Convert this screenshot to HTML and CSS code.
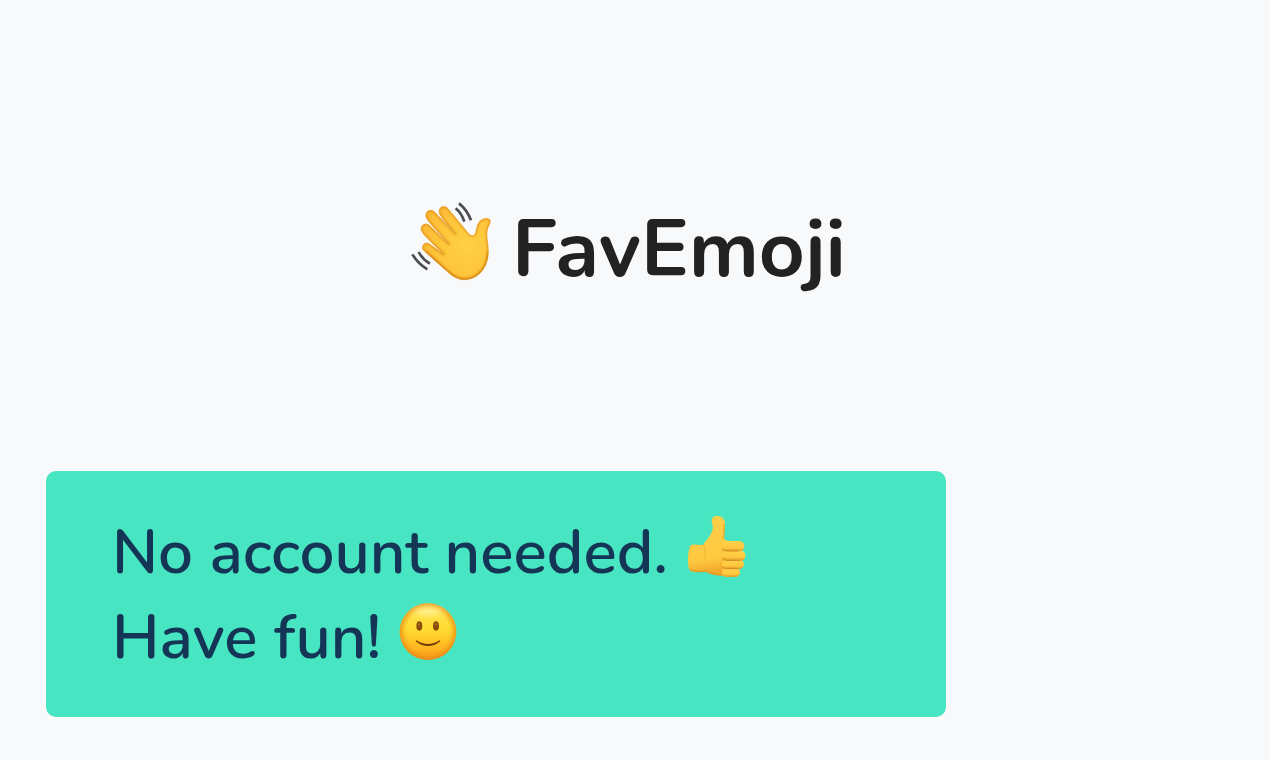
FILE: index.html
```html
<!DOCTYPE html>
<html lang="en">
    <head>
        <meta charset="UTF-8">
        <meta name="viewport" content="width=device-width, initial-scale=1.0">
        <title>FavEmoji</title>
        <link rel="stylesheet" href="styles.css">
    </head>
    <body>
        <header class="header">
            <h1 class="title">
                <svg class="emoji-wave" viewBox="30 30 246 246" aria-hidden="true">
                    <defs>
                        <radialGradient id="hand-fill" gradientUnits="userSpaceOnUse" cx="200" cy="165" r="140">
                            <stop offset="0" stop-color="#ffd045"/>
                            <stop offset="0.6" stop-color="#fec63b"/>
                            <stop offset="1" stop-color="#fbba35"/>
                        </radialGradient>
                        <clipPath id="hand-clip">
                            <path id="hand" d="M70 164C64 172 68 180 76 186L140 243C160 262 178 270 195 269C235 268 265 232 265 185C265 160 259 145 261 125C262 112 270 104 271 95C272 84 256 82 244 90C232 98 231 112 227 127C224 137 216 141 207 132L145 57C134 43 113 50 118 69C121 82 160 122 168 134L104 66C92 54 74 64 78 81C82 95 127 138 148 164L88 106C76 96 59 106 64 122C68 134 111 171 133 195L90 163C82 157 75 158 70 164Z"/>
                        </clipPath>
                        <filter id="soft" x="-20%" y="-20%" width="140%" height="140%">
                            <feGaussianBlur stdDeviation="3"/>
                        </filter>
                    </defs>
                    <use href="#hand" fill="url(#hand-fill)" stroke="#eba72f" stroke-width="2"/>
                    <g clip-path="url(#hand-clip)">
                        <use href="#hand" fill="none" stroke="#d98212" stroke-width="5" opacity="0.8" filter="url(#soft)"/>
                        <path d="M76 186L140 243C160 262 178 270 195 269C235 268 265 232 265 185" fill="none" stroke="#c9760f" stroke-width="8" opacity="0.7" filter="url(#soft)"/>
                    </g>
                    <path class="motion" d="M177 40Q201 59 213 91M167 55Q185 70 193 95M37 193Q55 222 82 238M56 186Q68 209 90 221"/>
                </svg>
                <span>FavEmoji</span>
            </h1>
        </header>
        <main class="content">
            <div class="card">
                <p class="card-line">
                    <span>No account needed.</span>
                    <svg class="emoji-thumb" viewBox="30 30 183 189" aria-hidden="true">
                        <defs>
                            <linearGradient id="thumb-fill" x1="0" y1="0" x2="0.1" y2="1">
                                <stop offset="0" stop-color="#ffcf49"/>
                                <stop offset="0.75" stop-color="#ffc940"/>
                                <stop offset="1" stop-color="#f0a52a"/>
                            </linearGradient>
                            <linearGradient id="finger-fill" x1="0" y1="0" x2="0" y2="1">
                                <stop offset="0" stop-color="#ffd34b"/>
                                <stop offset="0.65" stop-color="#ffc83f"/>
                                <stop offset="1" stop-color="#e29a27"/>
                            </linearGradient>
                        </defs>
                        <path d="M46 120C35 127 33 181 41 195C51 207 76 198 92 201C105 209 125 212 148 213L166 203L165 112L146 104C142 91 148 75 147 57C147 42 138 32 122 33C106 34 105 47 110 61C114 78 99 99 81 119C70 123 57 115 46 120Z" fill="url(#thumb-fill)"/>
                        <path d="M82 119C91 133 85 152 88 165M141 116C133 137 146 160 140 205" fill="none" stroke="#e69d25" stroke-width="3" opacity="0.5"/>
                        <path d="M145 57Q144 82 143 101M44 195Q65 201 90 199Q110 209 138 210" fill="none" stroke="#dc9423" stroke-width="4" opacity="0.6"/>
                        <g fill="url(#finger-fill)">
                            <rect x="138" y="188" width="54" height="28" rx="14"/>
                            <rect x="138" y="163" width="66" height="29" rx="14"/>
                            <rect x="137" y="136" width="71" height="31" rx="15"/>
                            <rect x="136" y="108" width="69" height="31" rx="15"/>
                        </g>
                        <path d="M140 129Q139 137 150 138H188M139 158Q141 165 150 166H191M139 184Q141 190 149 191H187" fill="none" stroke="#a6690c" stroke-width="2" opacity="0.6"/>
                    </svg>
                </p>
                <p class="card-line">
                    <span>Have fun!</span>
                    <svg class="emoji-smile" viewBox="24 24 174 174" aria-hidden="true">
                        <defs>
                            <linearGradient id="face-fill" x1="0" y1="0" x2="0" y2="1">
                                <stop offset="0" stop-color="#ffe45c"/>
                                <stop offset="0.45" stop-color="#ffdd31"/>
                                <stop offset="0.8" stop-color="#ffb521"/>
                                <stop offset="1" stop-color="#f8941a"/>
                            </linearGradient>
                            <radialGradient id="face-rim">
                                <stop offset="0.75" stop-color="#f39a18" stop-opacity="0"/>
                                <stop offset="1" stop-color="#e78414" stop-opacity="0.75"/>
                            </radialGradient>
                            <radialGradient id="face-shine">
                                <stop offset="0" stop-color="#fff6a0" stop-opacity="0.75"/>
                                <stop offset="1" stop-color="#fff6a0" stop-opacity="0"/>
                            </radialGradient>
                        </defs>
                        <circle cx="111" cy="110" r="85" fill="url(#face-fill)"/>
                        <circle cx="111" cy="110" r="85" fill="url(#face-rim)"/>
                        <ellipse cx="111" cy="49" rx="60" ry="24" fill="url(#face-shine)"/>
                        <ellipse cx="85" cy="93" rx="9" ry="14" fill="#8a4b0b"/>
                        <ellipse cx="135" cy="93" rx="9" ry="14" fill="#8a4b0b"/>
                        <ellipse cx="84" cy="88" rx="3" ry="5" fill="#b16f1a"/>
                        <ellipse cx="134" cy="88" rx="3" ry="5" fill="#b16f1a"/>
                        <path d="M77 136C96 151 126 151 145 136C148 135 148 138 145 141C126 157 96 157 77 141C74 138 74 135 77 136Z" fill="#70380a"/>
                    </svg>
                </p>
            </div>
        </main>
    </body>
</html>
```

FILE: styles.css
```css
body {
    margin: 0;
    background-color: #f8f9fb;
    color: #222;
    font-family: Nunito, Lato, sans-serif;
}
.header {
    padding: 195px 14px 166px 0;
}
.title {
    display: flex;
    justify-content: center;
    align-items: center;
    gap: 20px;
    margin: 0;
    font-size: 80px;
    font-weight: 700;
    line-height: 110px;
}
.emoji-wave {
    width: 82px;
    height: 82px;
    margin-bottom: 18px;
}
.motion {
    fill: none;
    stroke: #4b4d50;
    stroke-width: 8;
    stroke-linecap: butt;
}
.content {
    padding: 0 46px 43px;
}
.card {
    box-sizing: border-box;
    max-width: 900px;
    padding: 39px 66px 37px;
    border-radius: 10px;
    background-color: #48e5c2;
    color: #143555;
}
.card-line {
    display: flex;
    align-items: center;
    gap: 18px;
    margin: 0;
    font-size: 62px;
    font-weight: 600;
    line-height: 85px;
}
.emoji-thumb {
    width: 61px;
    height: 63px;
    margin-bottom: 12px;
}
.emoji-smile {
    width: 58px;
    height: 58px;
    margin-bottom: 12px;
}
```
